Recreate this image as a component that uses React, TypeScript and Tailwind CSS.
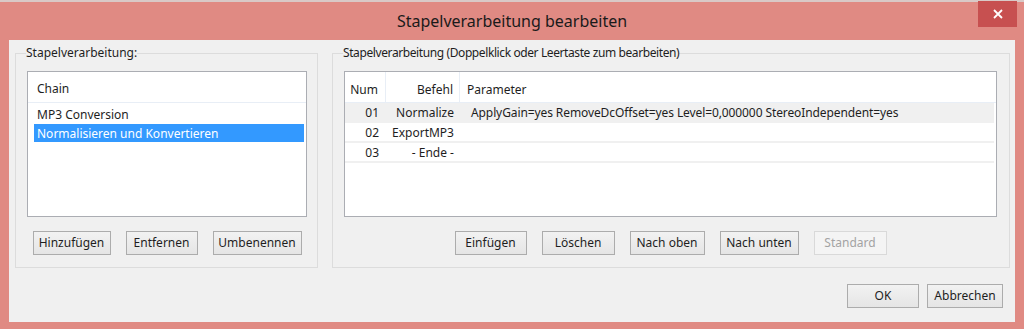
import React from 'react';

const font = { fontFamily: '"Noto Sans", "Open Sans", sans-serif' };

const Btn = ({ label, w, disabled }: { label: string; w: string; disabled?: boolean }) => (
  <button
    className={
      'h-[24px] border text-[12px] leading-none ' +
      w +
      (disabled
        ? ' border-[#d9d9d9] bg-[#f4f4f4] text-[#a3a3a3]'
        : ' border-[#acacac] bg-gradient-to-b from-[#f2f2f2] to-[#e5e5e5] text-[#1e1e1e]')
    }
  >
    {label}
  </button>
);

const rows = [
  { num: '01', cmd: 'Normalize', param: 'ApplyGain=yes RemoveDcOffset=yes Level=0,000000 StereoIndependent=yes' },
  { num: '02', cmd: 'ExportMP3', param: '' },
  { num: '03', cmd: '- Ende -', param: '' },
];

export default function App() {
  return (
    <div className="w-[1024px] h-[329px] bg-[#e08a83] flex flex-col overflow-hidden text-[#1e1e1e]" style={font}>
      {/* title bar */}
      <div className="h-[40px] relative flex items-center justify-center shrink-0">
        <div className="absolute top-0 left-0 right-0 h-[2px] bg-[#d9c9c7]" />
        <span className="text-[16px] text-[#1a1a1a] mt-[1px]">Stapelverarbeitung bearbeiten</span>
        <div className="absolute top-[1px] right-[7px] w-[39px] h-[26px] bg-[#c75050] flex items-center justify-center">
          <svg width="10" height="10" viewBox="0 0 10 10">
            <path d="M1 1 L9 9 M9 1 L1 9" stroke="#ffffff" strokeWidth="1.8" />
          </svg>
        </div>
      </div>

      {/* client area */}
      <div className="mx-[9px] h-[282px] bg-[#f0f0f0] flex flex-col pt-[5px] pl-[6px] pr-[5px]">
        <div className="flex gap-[14px]">
          <fieldset className="w-[303px] h-[223px] border border-[#dcdcdc] pl-[11px] pr-[10px] pt-[10px]">
            <legend className="-ml-[1px] text-[12px] leading-[16px]">Stapelverarbeitung:</legend>
            <div className="h-[146px] border border-[#abadb3] bg-white flex flex-col text-[12px]">
              <div className="h-[31px] flex items-center pt-[4px] pl-[9px] border-b border-[#e8eef6]">Chain</div>
              <div className="h-[20px] flex items-center pt-[3px] pl-[9px]">MP3 Conversion</div>
              <div className="h-[18px] ml-[6px] mr-[2px] mt-[1px] flex items-center pt-[1px] pl-[3px] bg-[#3399ff] text-white">
                Normalisieren und Konvertieren
              </div>
            </div>
            <div className="flex justify-center gap-[15px] mt-[14px]">
              <Btn label="Hinzufügen" w="w-[78px]" />
              <Btn label="Entfernen" w="w-[72px]" />
              <Btn label="Umbenennen" w="w-[89px]" />
            </div>
          </fieldset>

          <fieldset className="w-[678px] h-[223px] border border-[#dcdcdc] pl-[11px] pr-[12px] pt-[10px]">
            <legend className="-ml-[1px] text-[12px] leading-[16px] tracking-[-0.4px]">
              Stapelverarbeitung (Doppelklick oder Leertaste zum bearbeiten)
            </legend>
            <div className="h-[146px] border border-[#abadb3] bg-white flex flex-col text-[12px]">
              <div className="h-[31px] flex border-b border-[#e8eef6]">
                <div className="w-[41px] flex items-center justify-end pt-[5px] pr-[7px] border-r border-[#e8eef6]">Num</div>
                <div className="w-[74px] flex items-center justify-end pt-[5px] pr-[6px] border-r border-[#e8eef6]">Befehl</div>
                <div className="flex-1 flex items-center pt-[5px] pl-[7px]">Parameter</div>
              </div>
              {rows.map((r, i) => (
                <div
                  key={r.num}
                  className={
                    'h-[20px] flex mr-[2px] pt-[2px] border-b-2 border-[#f0f0f0] ' + (i === 0 ? 'bg-[#f0f0f0]' : 'bg-white')
                  }
                >
                  <div className="w-[41px] flex items-center justify-end pr-[7px]">{r.num}</div>
                  <div className="w-[74px] flex items-center justify-end pr-[6px]">{r.cmd}</div>
                  <div className="flex-1 flex items-center pl-[11px] whitespace-nowrap tracking-[-0.1px]">{r.param}</div>
                </div>
              ))}
            </div>
            <div className="flex justify-center gap-[15px] mt-[14px]">
              <Btn label="Einfügen" w="w-[72px]" />
              <Btn label="Löschen" w="w-[73px]" />
              <Btn label="Nach oben" w="w-[75px]" />
              <Btn label="Nach unten" w="w-[79px]" />
              <Btn label="Standard" w="w-[73px]" disabled />
            </div>
          </fieldset>
        </div>

        <div className="flex justify-end gap-[8px] mt-[16px] pr-[7px]">
          <Btn label="OK" w="w-[72px]" />
          <Btn label="Abbrechen" w="w-[76px]" />
        </div>
      </div>
    </div>
  );
}
